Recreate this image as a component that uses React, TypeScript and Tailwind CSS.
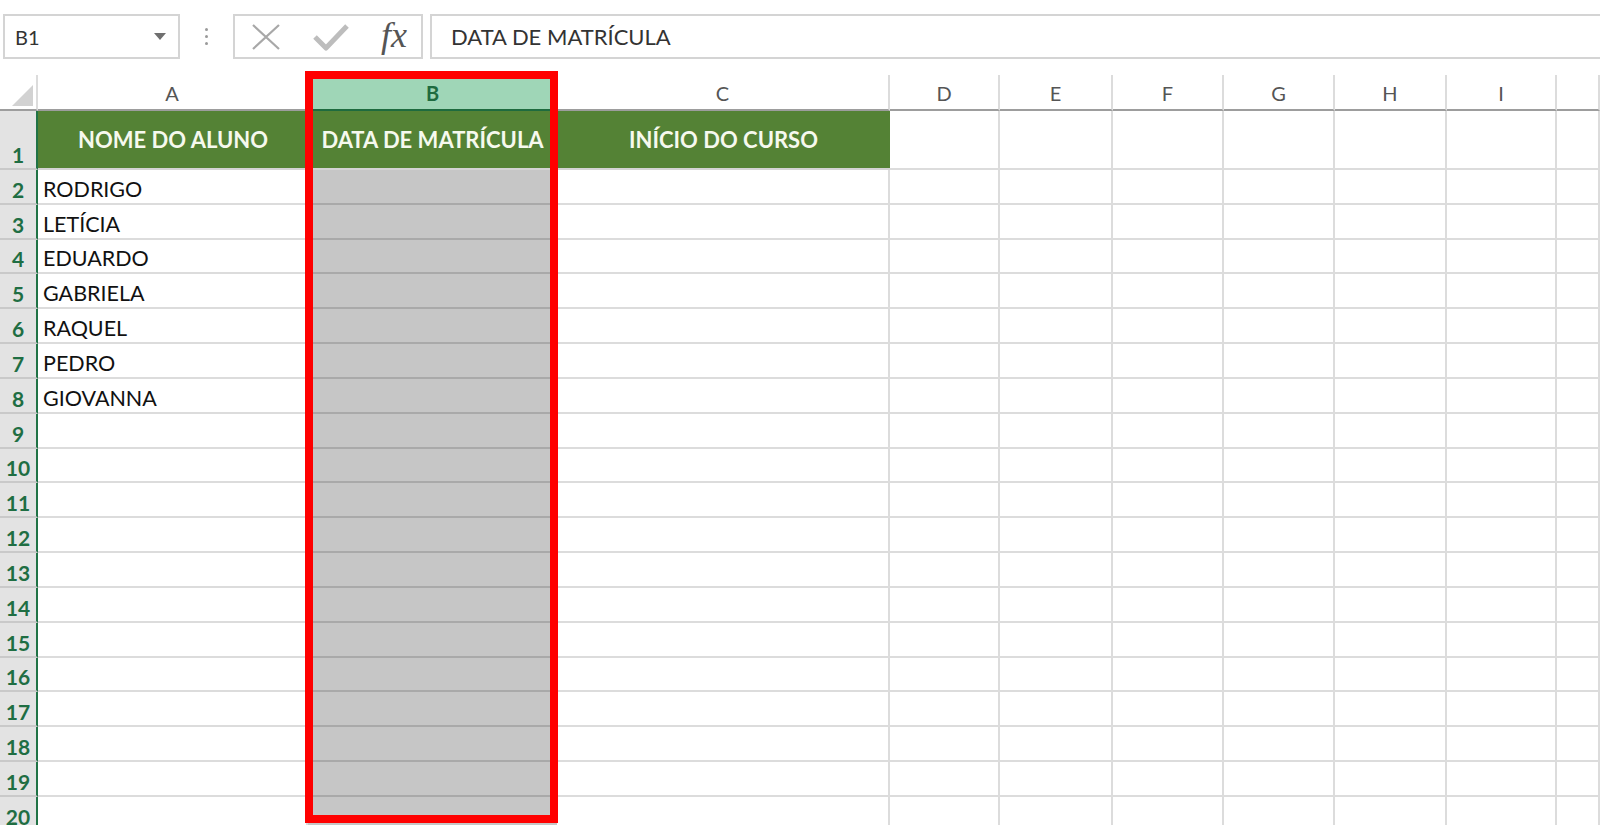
import React from "react";

const COLS = ["A", "B", "C", "D", "E", "F", "G", "H", "I", ""];
const NAMES = ["RODRIGO", "LETÍCIA", "EDUARDO", "GABRIELA", "RAQUEL", "PEDRO", "GIOVANNA"];
const HEADERS = ["NOME DO ALUNO", "DATA DE MATRÍCULA", "INÍCIO DO CURSO"];

function FormulaBar() {
    return (
        <div className="flex items-center h-[75px] pt-[14px] pb-[16px] pl-[3px]">
            {/* Name box */}
            <div className="w-[177px] h-[45px] border-2 border-[#d4d4d4] flex items-center justify-between pl-[10px] pr-[12px]">
                <span className="text-[20px] text-[#333]">B1</span>
                <svg width="12" height="7" viewBox="0 0 12 7">
                    <path d="M0 0 L12 0 L6 7 Z" fill="#6f6f6f" />
                </svg>
            </div>

            <div className="w-[53px] flex flex-col items-center gap-[4px]">
                <span className="w-[3px] h-[3px] rounded-full bg-[#9a9a9a]"></span>
                <span className="w-[3px] h-[3px] rounded-full bg-[#9a9a9a]"></span>
                <span className="w-[3px] h-[3px] rounded-full bg-[#9a9a9a]"></span>
            </div>

            {/* Cancel / enter / insert function */}
            <div className="w-[190px] h-[45px] border-2 border-[#d4d4d4] flex items-center pl-[16px] pr-[14px] justify-between">
                <svg width="30" height="28" viewBox="0 0 30 28">
                    <path d="M2 2 L28 26 M28 2 L2 26" stroke="#a8a8a8" strokeWidth="2.2" fill="none" />
                </svg>
                <svg width="36" height="28" viewBox="0 0 36 28">
                    <path d="M2 14 L13 25 L34 3" stroke="#bdbdbd" strokeWidth="5" fill="none" strokeLinejoin="round" />
                </svg>
                <span className="font-['Liberation_Serif',serif] italic text-[36px] leading-none text-[#555] -mt-[4px]">
                    fx
                </span>
            </div>

            {/* Formula input */}
            <div className="flex-1 ml-[7px] h-[45px] border-2 border-r-0 border-[#d4d4d4] flex items-center pl-[19px]">
                <span className="text-[22px] text-[#333]">DATA DE MATRÍCULA</span>
            </div>
        </div>
    );
}

function Sheet() {
    const rows = Array.from({ length: 20 }, (_, i) => i + 1);

    return (
        <div className="grid grid-cols-[38px_270px_249px_333px_110px_113px_111px_111px_112px_110px_1fr]">
            {/* Column headers */}
            <div className="h-[36px] bg-white border-b-2 border-[#9d9d9d] border-r-2 border-r-[#dcdcdc] relative">
                <svg className="absolute left-[12px] top-[10px]" width="21" height="21" viewBox="0 0 21 21">
                    <path d="M21 0 L21 21 L0 21 Z" fill="#d2d2d2" />
                </svg>
            </div>
            {COLS.map((c, i) =>
                c === "B" ? (
                    <div
                        key={i}
                        className="h-[36px] bg-[#9fd6b7] border-b-2 border-[#1e6b3f] flex items-center justify-center pt-[2px]"
                    >
                        <span className="text-[20px] font-bold text-[#1e6b3f]">B</span>
                    </div>
                ) : (
                    <div
                        key={i}
                        className="h-[36px] bg-white border-b-2 border-[#9d9d9d] border-r-2 border-r-[#dcdcdc] flex items-center justify-center pt-[2px]"
                    >
                        <span className="text-[20px] text-[#555]">{c}</span>
                    </div>
                )
            )}

            {rows.map((r) => (
                <React.Fragment key={r}>
                    {/* Row number */}
                    <div
                        className={`${r === 1 ? "h-[59px]" : "h-[34.83px]"} bg-[#e3e3e3] border-b-2 border-[#c9c9c9] border-r-2 border-r-[#217346] flex items-end justify-center`}
                    >
                        <span className="text-[21px] leading-[26px] font-bold text-[#1f6e43]">{r}</span>
                    </div>

                    {COLS.map((_, ci) => {
                        if (r === 1 && ci < 3) {
                            return (
                                <div
                                    key={ci}
                                    className="h-[59px] bg-[#548235] border-b-2 border-[#d4d4d4] flex items-center justify-center"
                                >
                                    <span className="text-[22px] font-bold text-[#f6f9ee] whitespace-nowrap">
                                        {HEADERS[ci]}
                                    </span>
                                </div>
                            );
                        }
                        const h = r === 1 ? "h-[59px]" : "h-[34.83px]";
                        if (ci === 1) {
                            return (
                                <div key={ci} className={`${h} bg-[#c6c6c6] border-b-2 border-[#a9a9a9]`}></div>
                            );
                        }
                        const name = ci === 0 && r >= 2 ? NAMES[r - 2] : undefined;
                        return (
                            <div
                                key={ci}
                                className={`${h} bg-white border-b-2 border-r-2 border-[#dcdcdc] flex items-end pl-[5px]`}
                            >
                                {name && (
                                    <span className="text-[21.5px] leading-[28px] text-[#111]">{name}</span>
                                )}
                            </div>
                        );
                    })}
                </React.Fragment>
            ))}
        </div>
    );
}

export default function App() {
    return (
        <div className="w-[1600px] h-[825px] overflow-hidden bg-white relative font-['Lato',sans-serif]">
            <FormulaBar />
            <Sheet />

            {/* Highlight around column B */}
            <div className="absolute left-[305px] top-[71px] w-[253px] h-[752px] border-[8px] border-[#ff0000] pointer-events-none"></div>
        </div>
    );
}
